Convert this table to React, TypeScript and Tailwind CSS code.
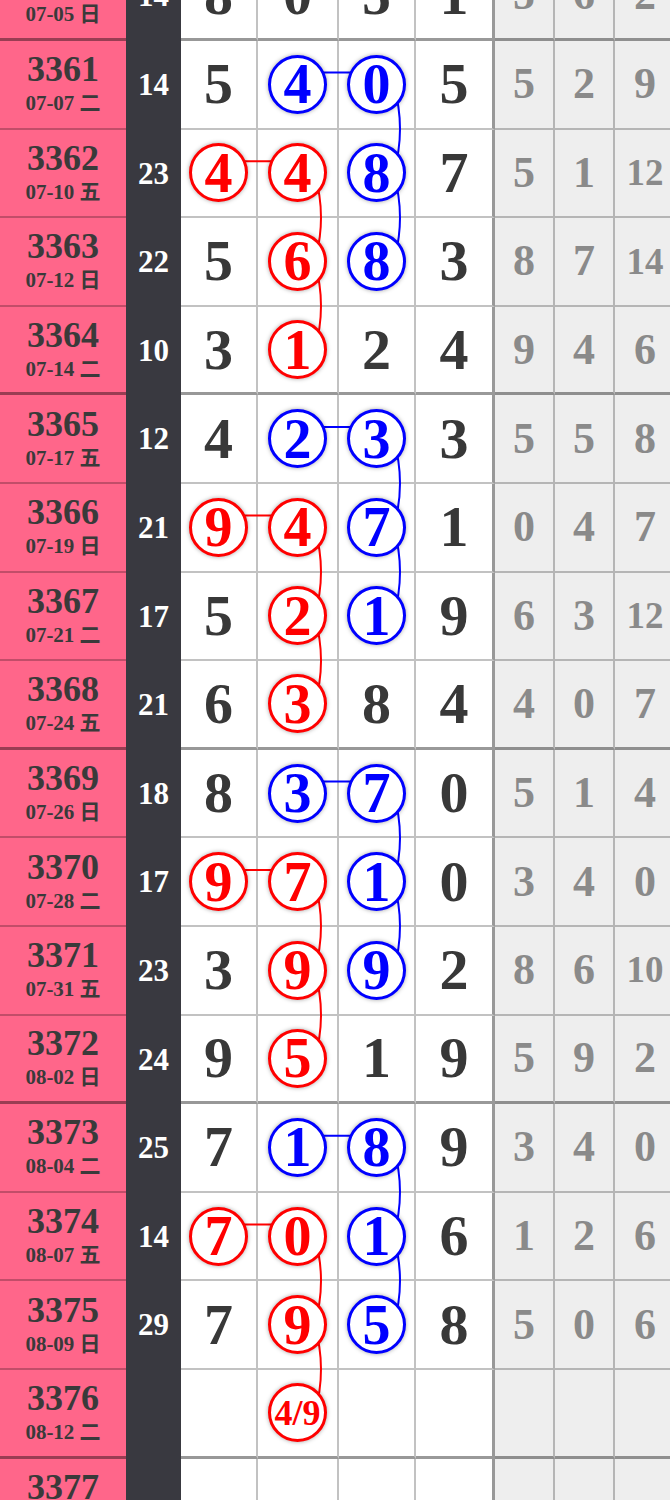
import React from "react";

type Row = { id: string; date: string; sum: string; n: string[]; g: string[] };

const rows: Row[] = [
  { id: "3360", date: "07-05 日", sum: "14", n: ["8", "0", "5", "1"], g: ["5", "6", "2"] },
  { id: "3361", date: "07-07 二", sum: "14", n: ["5", "b4", "b0", "5"], g: ["5", "2", "9"] },
  { id: "3362", date: "07-10 五", sum: "23", n: ["r4", "r4", "b8", "7"], g: ["5", "1", "12"] },
  { id: "3363", date: "07-12 日", sum: "22", n: ["5", "r6", "b8", "3"], g: ["8", "7", "14"] },
  { id: "3364", date: "07-14 二", sum: "10", n: ["3", "r1", "2", "4"], g: ["9", "4", "6"] },
  { id: "3365", date: "07-17 五", sum: "12", n: ["4", "b2", "b3", "3"], g: ["5", "5", "8"] },
  { id: "3366", date: "07-19 日", sum: "21", n: ["r9", "r4", "b7", "1"], g: ["0", "4", "7"] },
  { id: "3367", date: "07-21 二", sum: "17", n: ["5", "r2", "b1", "9"], g: ["6", "3", "12"] },
  { id: "3368", date: "07-24 五", sum: "21", n: ["6", "r3", "8", "4"], g: ["4", "0", "7"] },
  { id: "3369", date: "07-26 日", sum: "18", n: ["8", "b3", "b7", "0"], g: ["5", "1", "4"] },
  { id: "3370", date: "07-28 二", sum: "17", n: ["r9", "r7", "b1", "0"], g: ["3", "4", "0"] },
  { id: "3371", date: "07-31 五", sum: "23", n: ["3", "r9", "b9", "2"], g: ["8", "6", "10"] },
  { id: "3372", date: "08-02 日", sum: "24", n: ["9", "r5", "1", "9"], g: ["5", "9", "2"] },
  { id: "3373", date: "08-04 二", sum: "25", n: ["7", "b1", "b8", "9"], g: ["3", "4", "0"] },
  { id: "3374", date: "08-07 五", sum: "14", n: ["r7", "r0", "b1", "6"], g: ["1", "2", "6"] },
  { id: "3375", date: "08-09 日", sum: "29", n: ["7", "r9", "b5", "8"], g: ["5", "0", "6"] },
  { id: "3376", date: "08-12 二", sum: "", n: ["", "r4/9", "", ""], g: ["", "", ""] },
  { id: "3377", date: "08-14 五", sum: "", n: ["", "", "", ""], g: ["", "", ""] },
];

const RH = 88.6;
const CX = [219, 297.5, 376.5, 453.5];

function Digit({ v }: { v: string }) {
  if (!v) return null;
  const kind = v[0];
  if (kind === "r" || kind === "b") {
    const t = v.slice(1);
    const small = t.length > 1;
    if (kind === "r") {
      return (
        <div
          className={
            small
              ? "relative z-10 flex h-[59px] w-[59px] items-center justify-center rounded-full border-[3px] border-[#ff0000] bg-white text-[36px] leading-none font-bold text-[#ff0000] shadow-[0_0_4px_rgba(0,0,0,0.35)]"
              : "relative z-10 flex h-[59px] w-[59px] items-center justify-center rounded-full border-[3px] border-[#ff0000] bg-white text-[56px] leading-none font-bold text-[#ff0000] shadow-[0_0_4px_rgba(0,0,0,0.35)]"
          }
        >
          {t}
        </div>
      );
    }
    return (
      <div className="relative z-10 flex h-[59px] w-[59px] items-center justify-center rounded-full border-[3px] border-[#0000ff] bg-white text-[56px] leading-none font-bold text-[#0000ff] shadow-[0_0_4px_rgba(0,0,0,0.35)]">
        {t}
      </div>
    );
  }
  return <span className="text-[58px] leading-none font-bold text-[#383838]">{v}</span>;
}

export default function App() {
  const totalH = rows.length * RH;
  const paths: { d: string; c: string }[] = [];
  [1, 5, 9, 13].forEach((s) => {
    const cy = (i: number) => i * RH + 44;
    paths.push({ d: `M ${CX[1]} ${cy(s) - 12} L ${CX[2]} ${cy(s) - 12}`, c: "#0000ff" });
    for (let k = 0; k < 2; k++) {
      const y = cy(s + k);
      paths.push({
        d: `M ${CX[2] + 17} ${y} Q ${CX[2] + 30} ${y + RH / 2} ${CX[2] + 17} ${y + RH}`,
        c: "#0000ff",
      });
    }
    paths.push({ d: `M ${CX[0]} ${cy(s + 1) - 12} L ${CX[1]} ${cy(s + 1) - 12}`, c: "#ff0000" });
    for (let k = 1; k < 3; k++) {
      const y = cy(s + k);
      paths.push({
        d: `M ${CX[1] + 17} ${y} Q ${CX[1] + 30} ${y + RH / 2} ${CX[1] + 17} ${y + RH}`,
        c: "#ff0000",
      });
    }
  });

  return (
    <div
      className="h-[1500px] w-[670px] overflow-hidden bg-white"
      style={{ fontFamily: '"Liberation Serif", "Noto Sans CJK SC", serif' }}
    >
      <div className="relative -mt-[47.6px] w-[673px]">
        {rows.map((r, i) => {
          const thick = i % 4 === 0;
          const bb = thick
            ? "border-b-[3px] border-b-[rgba(0,0,0,0.4)]"
            : "border-b-2 border-b-[rgba(0,0,0,0.24)]";
          return (
            <div key={r.id} className="flex h-[88.6px]">
              <div
                className={`flex w-[126px] shrink-0 flex-col items-center justify-center bg-[#ff668a] text-[#3a3a3a] ${bb}`}
              >
                <div className="text-[36px] leading-[38px] font-bold">{r.id}</div>
                <div className="text-[21px] leading-[30px] font-bold">{r.date}</div>
              </div>
              <div className="flex w-[55px] shrink-0 items-center justify-center bg-[#393940] text-[31px] font-bold text-white">
                {r.sum}
              </div>
              {r.n.map((v, j) => (
                <div
                  key={j}
                  className={`flex shrink-0 items-center justify-center bg-white ${bb} ${
                    j === 0
                      ? "w-[77px] border-r-2 border-r-[rgba(0,0,0,0.24)]"
                      : j === 1
                      ? "w-[81px] border-r-2 border-r-[rgba(0,0,0,0.24)]"
                      : j === 2
                      ? "w-[77px] border-r-2 border-r-[rgba(0,0,0,0.24)]"
                      : "w-[79px] border-r-[3px] border-r-[rgba(0,0,0,0.4)]"
                  }`}
                >
                  <Digit v={v} />
                </div>
              ))}
              {r.g.map((v, j) => (
                <div
                  key={j}
                  className={`flex shrink-0 items-center justify-center bg-[#eeeeee] font-bold text-[#8a8a8a] ${bb} ${
                    j === 0
                      ? "w-[60px] border-r-2 border-r-[rgba(0,0,0,0.24)]"
                      : j === 1
                      ? "w-[60px] border-r-2 border-r-[rgba(0,0,0,0.24)]"
                      : "w-[60px]"
                  } ${v.length > 1 ? "text-[37px]" : "text-[44px]"}`}
                >
                  {v}
                </div>
              ))}
            </div>
          );
        })}
        <svg
          className="pointer-events-none absolute top-0 left-0 z-[5]"
          width={673}
          height={totalH}
          viewBox={`0 0 673 ${totalH}`}
        >
          {paths.map((p, k) => (
            <path key={k} d={p.d} stroke={p.c} strokeWidth={2} fill="none" />
          ))}
        </svg>
      </div>
    </div>
  );
}
